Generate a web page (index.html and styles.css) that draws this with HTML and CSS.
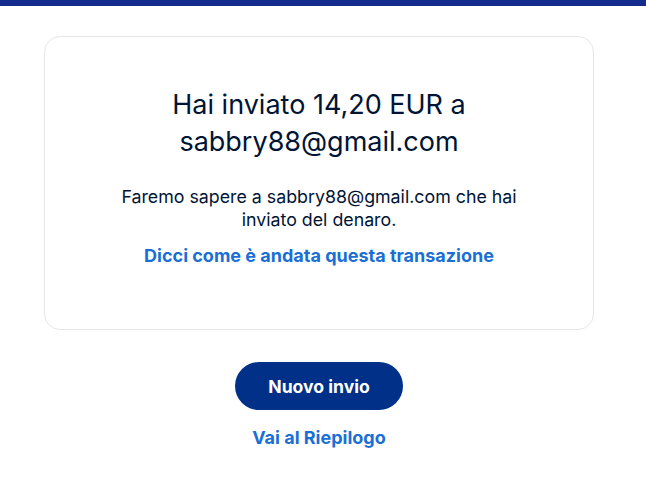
FILE: index.html
```html
<!DOCTYPE html>
<html lang="it">
<head>
  <meta charset="UTF-8" />
  <title>Invio completato</title>
  <link rel="stylesheet" href="styles.css">
</head>
<body>
  <div class="top-bar"></div>

  <main class="page">
    <div class="card">
      <h1 class="title">Hai inviato 14,20 EUR a<br>sabbry88@gmail.com</h1>
      <p class="note">Faremo sapere a sabbry88@gmail.com che hai<br>inviato del denaro.</p>
      <a class="link" href="#">Dicci come è andata questa transazione</a>
    </div>

    <div class="actions">
      <button class="btn-primary">Nuovo invio</button>
      <a class="link" href="#">Vai al Riepilogo</a>
    </div>
  </main>
</body>
</html>
```

FILE: styles.css
```css
* {
  box-sizing: border-box;
}

body {
  font-family: Inter, 'Liberation Sans', Arial, sans-serif;
  background: #ffffff;
  color: #001435;
  margin: 0;
}

.top-bar {
  height: 6px;
  background: #142c8e;
}

.page {
  padding: 30px 52px 0 44px;
}

.card {
  border: 1px solid #e6e6e6;
  border-radius: 16px;
  height: 294px;
  padding: 49px 10px 0;
  text-align: center;
}

.title {
  font-size: 27px;
  font-weight: 400;
  line-height: 37px;
  margin: 0;
}

.note {
  font-size: 17.8px;
  line-height: 23px;
  margin: 25px 0 14px;
}

.link {
  display: inline-block;
  color: #1a6fd6;
  font-size: 18px;
  line-height: 22px;
  font-weight: 700;
  text-decoration: none;
}

.actions {
  display: flex;
  flex-direction: column;
  align-items: center;
  padding-top: 32px;
}

.btn-primary {
  width: 168px;
  height: 48px;
  border: none;
  border-radius: 24px;
  background: #003087;
  color: #ffffff;
  font-family: inherit;
  font-size: 17.6px;
  font-weight: 700;
  cursor: pointer;
  margin-bottom: 17px;
}
```
